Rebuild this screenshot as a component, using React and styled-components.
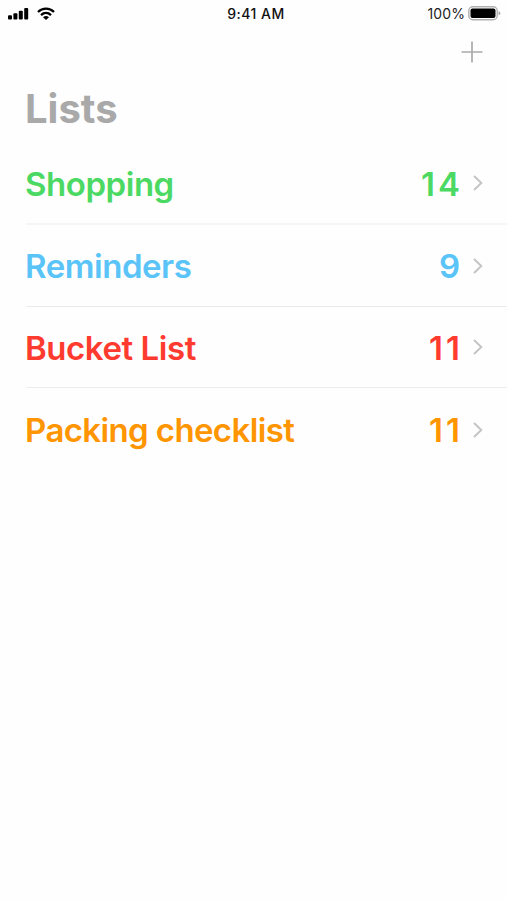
import * as React from 'react';
import styled, { createGlobalStyle } from 'styled-components';

const lists = [
  {name: 'Shopping', count: 14, color: '#4bd964', line: '#f6f6f6', thick: 2},
  {name: 'Reminders', count: 9, color: '#5ac4f8', line: '#ebebeb'},
  {name: 'Bucket List', count: 11, color: '#ff3b30', line: '#ededed'},
  {name: 'Packing checklist', count: 11, color: '#ff9500', spacing: '-0.62px'},
];

const StatusBar = () => (
  <Status>
    <Signal>
      <svg width="21" height="12" viewBox="0 0 21 12" fill="#000">
        <rect x="0" y="7.2" width="4" height="4.4" rx="1" />
        <rect x="5.4" y="5.2" width="4" height="6.4" rx="1" />
        <rect x="10.8" y="2.8" width="4" height="8.8" rx="1" />
        <rect x="16.2" y="0" width="4" height="11.6" rx="1" />
      </svg>
      <svg width="18" height="13" viewBox="0 0 18 13" fill="none" stroke="#000" strokeWidth="2.3">
        <path d="M1 5 C5.5 0.5 12.5 0.5 17 5" />
        <path d="M4 8.1 C7 5.3 11 5.3 14 8.1" />
        <path d="M6 10.2 Q9 7.8 12 10.2 L9 13Z" fill="#000" stroke="none" />
      </svg>
    </Signal>
    <Time>9:41 AM</Time>
    <Power>
      <span>100%</span>
      <svg width="33" height="15" viewBox="0 0 33 15">
        <rect x="0.8" y="0.8" width="28.4" height="13" rx="4" fill="#fff" stroke="#b0b0b0" strokeWidth="1.4" />
        <rect x="2.5" y="2.6" width="25" height="9.4" rx="2" fill="#000" />
        <path d="M30.6 5.3 Q32.2 6 32.2 7.3 T30.6 9.3Z" fill="#999" />
      </svg>
    </Power>
  </Status>
);

const App = () => (
  <Screen>
    <GlobalStyle />
    <StatusBar />
    <Toolbar>
      <AddButton aria-label="Add list">
        <svg width="22" height="22" viewBox="0 0 22 22" stroke="#aaa" strokeWidth="1.7">
          <path d="M11 0.5V21.5M0.5 11H21.5" />
        </svg>
      </AddButton>
    </Toolbar>
    <Title>Lists</Title>
    <Rows>
      {lists.map((list) => (
        <Row key={list.name} $color={list.color} $line={list.line} $thick={list.thick}>
          <Name $spacing={list.spacing}>{list.name}</Name>
          <Count>{list.count}</Count>
          <Chevron width="10" height="16" viewBox="0 0 10 16">
            <path d="M1 1L8.3 8L1 15" />
          </Chevron>
        </Row>
      ))}
    </Rows>
  </Screen>
);

const GlobalStyle = createGlobalStyle`
body {
  margin: 0;
  background-color: #fefefe;
  font-family: Inter, "Liberation Sans", sans-serif;
}
`
const Screen = styled.main`
width: 100%;
min-height: 900px;
overflow: hidden;
background-color: #fefefe;
svg {
  display: block;
  flex: none;
}
`
const Status = styled.header`
display: grid;
grid-template-columns: 1fr auto 1fr;
align-items: center;
height: 27px;
padding: 0 6px 0 8px;
box-sizing: border-box;
color: #111;
`
const Signal = styled.div`
display: flex;
align-items: center;
gap: 8px;
`
const Time = styled.span`
margin-left: 3px;
font-size: 14px;
font-weight: 550;
letter-spacing: 0.5px;
`
const Power = styled.div`
display: flex;
justify-content: flex-end;
align-items: center;
gap: 3px;
font-size: 14px;
letter-spacing: 0.1px;
color: #222;
`
const Toolbar = styled.div`
display: flex;
justify-content: flex-end;
height: 54px;
padding: 14px 24px 0 0;
box-sizing: border-box;
`
const AddButton = styled.button`
width: 22px;
height: 22px;
padding: 0;
border: none;
background: none;
`
const Title = styled.h1`
height: 62px;
margin: 0;
padding-left: 25px;
font-size: 40px;
font-weight: 700;
line-height: 56px;
letter-spacing: 0;
color: #a9a9a9;
`
const Rows = styled.ul`
margin: 0;
padding: 0 0 0 26px;
list-style: none;
`
const Row = styled.li`
display: flex;
align-items: center;
height: 81.8px;
padding: 2px 24px 0 0;
box-sizing: border-box;
border-bottom: ${(p) => p.$line ? `${p.$thick || 1}px solid ${p.$line}` : 'none'};
font-size: 33px;
font-weight: 600;
color: ${(p) => p.$color};
`
const Name = styled.span`
flex: 1;
margin-left: -1px;
letter-spacing: ${(p) => p.$spacing || '-0.45px'};
`
const Count = styled.span`
margin-right: 10px;
letter-spacing: 3px;
`
const Chevron = styled.svg`
margin-bottom: 1px;
fill: none;
stroke: #c4c4c6;
stroke-width: 1.9px;
`
export default App;
